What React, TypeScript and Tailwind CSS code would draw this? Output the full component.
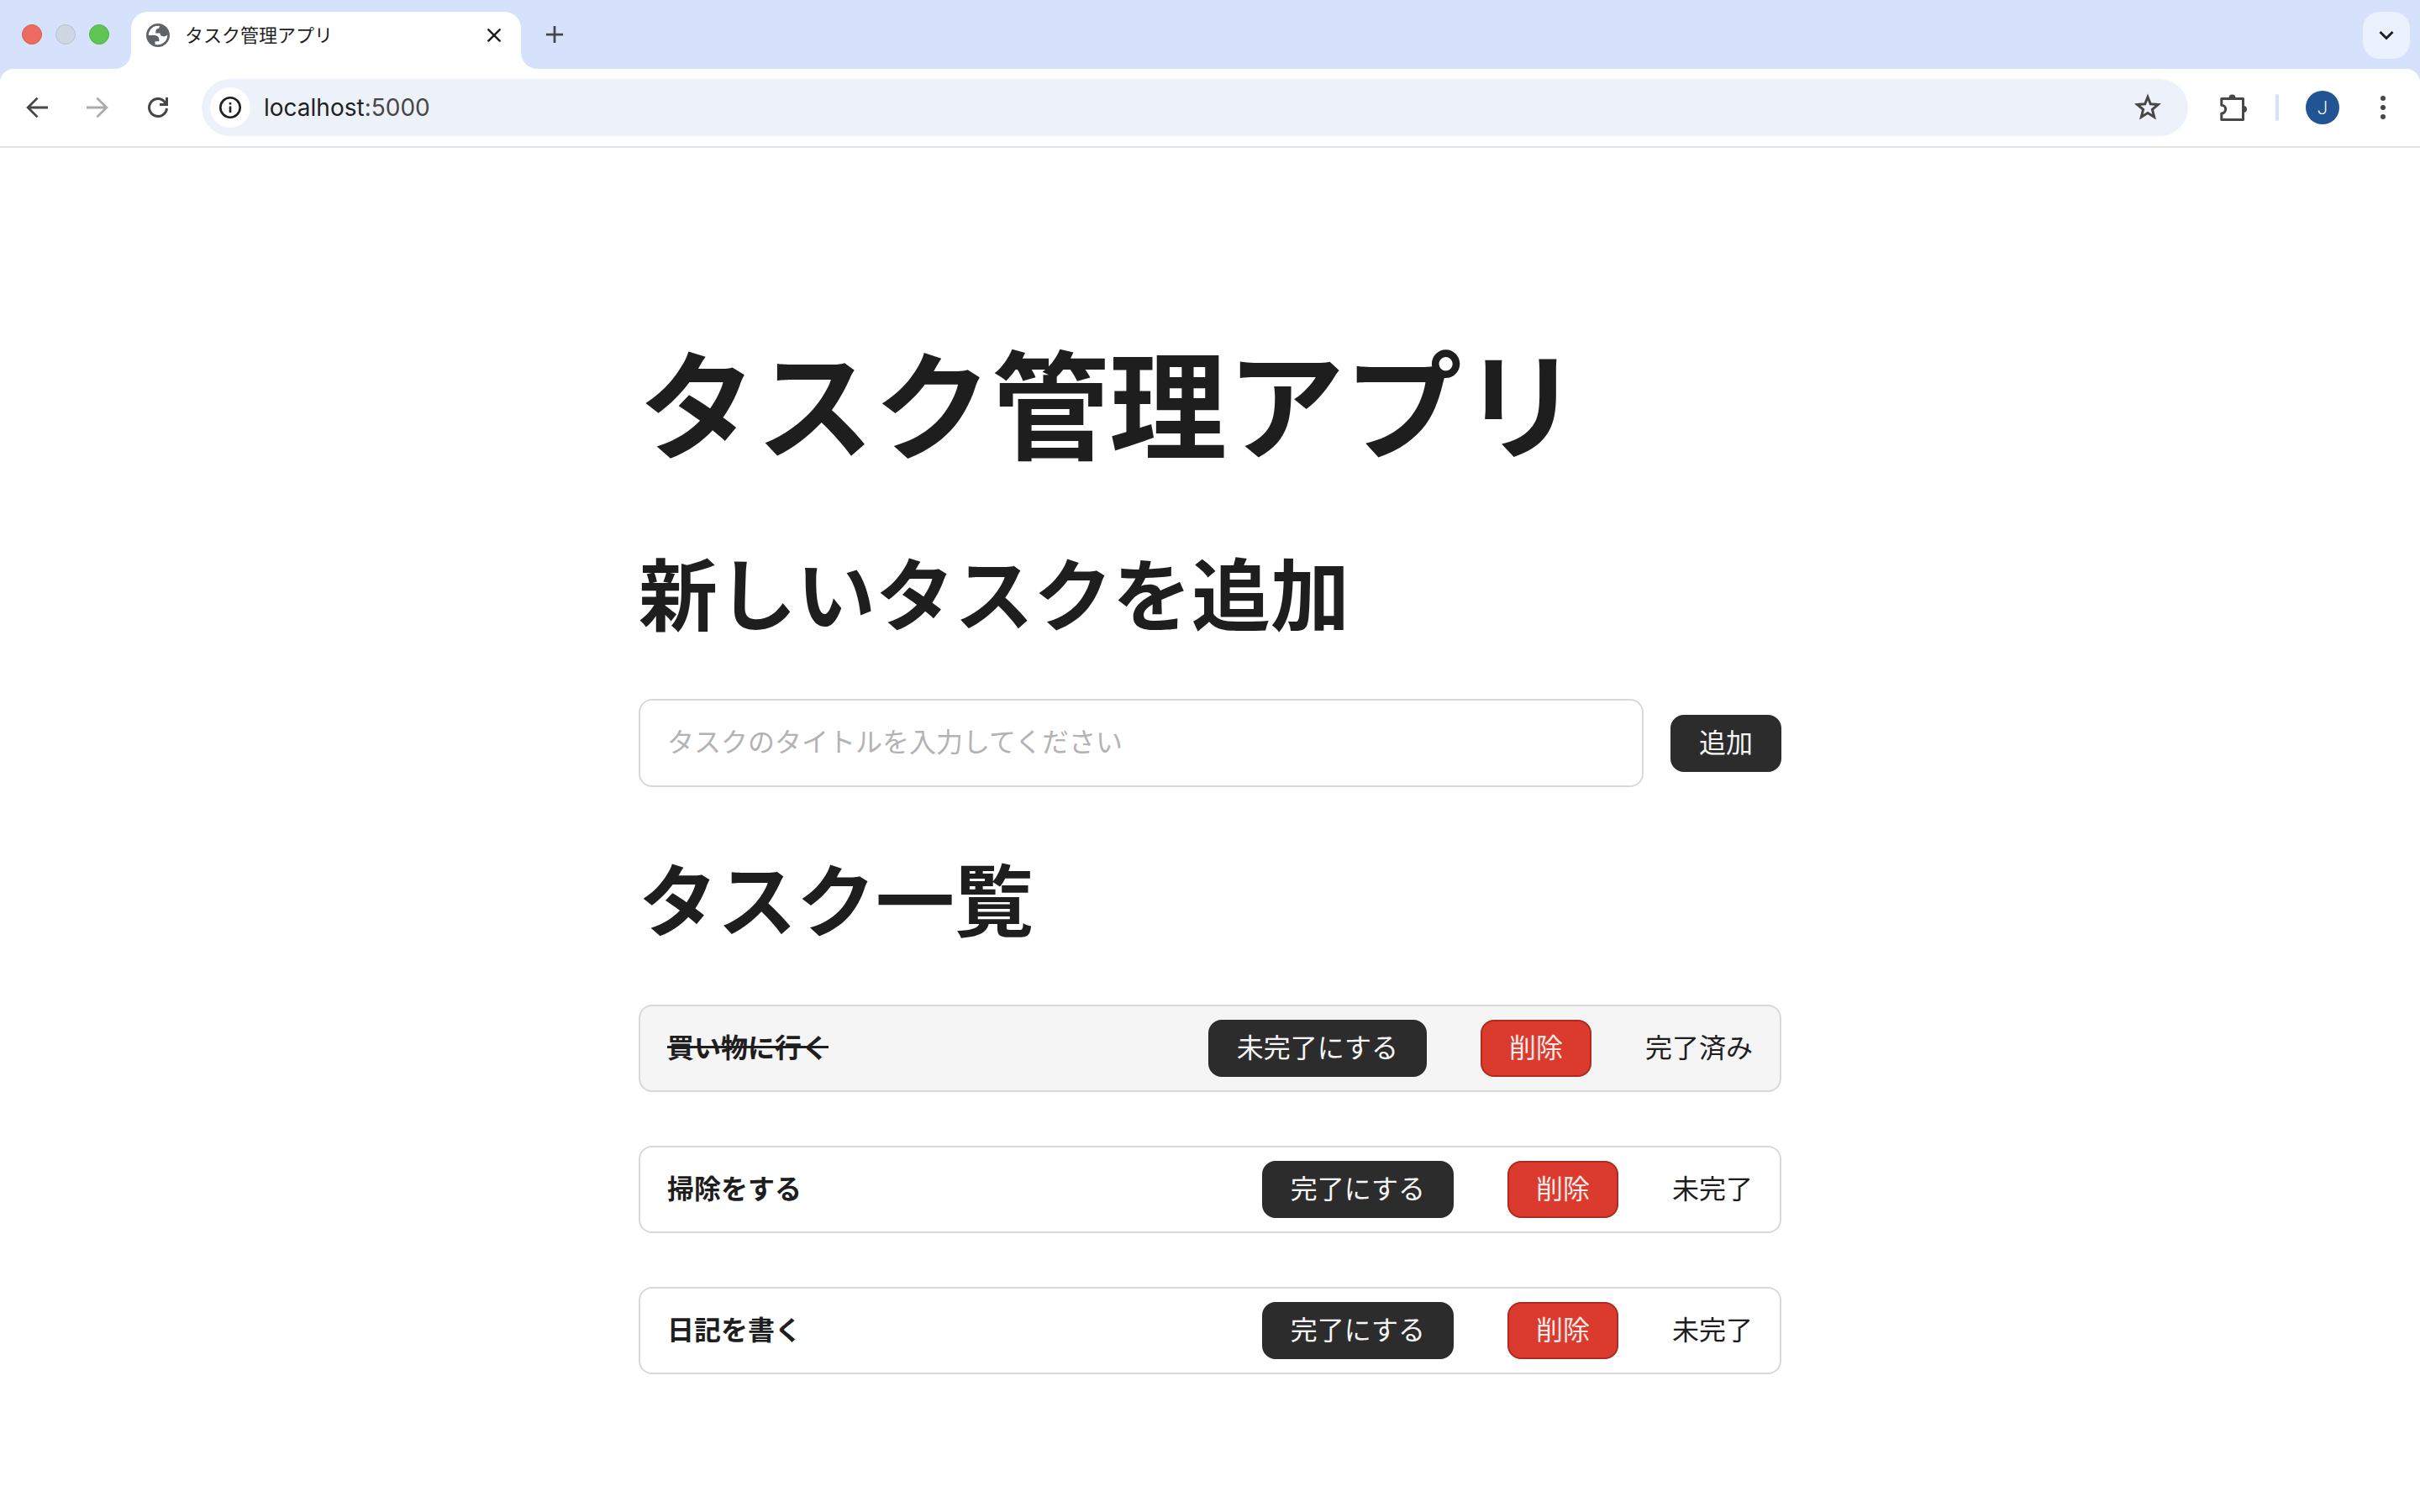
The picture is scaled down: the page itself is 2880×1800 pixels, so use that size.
import { useState } from "react";
import type { ReactNode } from "react";

interface Task {
  id: number;
  title: string;
  done: boolean;
}

const INITIAL_TASKS: Task[] = [
  { id: 1, title: "買い物に行く", done: true },
  { id: 2, title: "掃除をする", done: false },
  { id: 3, title: "日記を書く", done: false },
];

function GlobeIcon() {
  return (
    <svg viewBox="2 2 20 20" className="size-7 shrink-0 fill-[#5f6368]" aria-hidden="true">
      <path
        fillRule="evenodd"
        d="M12 2C6.48 2 2 6.48 2 12s4.48 10 10 10 10-4.48 10-10S17.52 2 12 2zM4 12h4.400c3.407.022 4.922 1.730 4.543 5.127H9.488v2.470a8.004 8.004 0 0 0 10.498-8.083C19.327 12.504 18.332 13 17 13c-2.137 0-3.206-.916-3.206-2.750h-3.748c-.274-2.728.683-4.092 2.870-4.092 0-.975.327-1.597.811-1.970A8.004 8.004 0 0 0 4 12z"
      />
    </svg>
  );
}

function StrokeIcon({ d, className }: { d: string; className: string }) {
  return (
    <svg viewBox="0 0 24 24" className={className} fill="none" stroke="currentColor" aria-hidden="true">
      <path d={d} />
    </svg>
  );
}

function ToolbarButton({ label, children }: { label: string; children: ReactNode }) {
  return (
    <button type="button" aria-label={label} className="flex size-14 shrink-0 items-center justify-center text-[#474747]">
      {children}
    </button>
  );
}

function TabStrip() {
  return (
    <div className="flex h-[82px] items-end bg-[#d6e1fc]">
      <div className="flex h-full w-[136px] shrink-0 items-center gap-4 pl-[26px]">
        <span className="size-6 rounded-full border border-[#dc5a4e] bg-[#ed6b5f]" />
        <span className="size-6 rounded-full border border-[#b9c0cf] bg-[#ced5e3]" />
        <span className="size-6 rounded-full border border-[#52b043] bg-[#61c554]" />
      </div>

      {/* 現在のタブ。両端の裾は内側に丸める */}
      <div className="size-5 shrink-0 bg-white">
        <div className="size-5 rounded-br-[20px] bg-[#d6e1fc]" />
      </div>
      <div className="flex h-[68px] w-[464px] shrink-0 items-center rounded-t-[20px] bg-white pr-4 pb-3 pl-[18px]">
        <GlobeIcon />
        <span className="ml-[18px] flex-1 pb-1 text-[22px] leading-8 text-[#1f1f1f]">タスク管理アプリ</span>
        <button type="button" aria-label="タブを閉じる" className="flex size-8 items-center justify-center text-[#1f1f1f]">
          <StrokeIcon d="M4 4l16 16M20 4L4 20" className="size-5 stroke-3 [stroke-linecap:round]" />
        </button>
      </div>
      <div className="size-5 shrink-0 bg-white">
        <div className="size-5 rounded-bl-[20px] bg-[#d6e1fc]" />
      </div>

      <button type="button" aria-label="新しいタブ" className="flex h-full w-10 items-center justify-center text-[#474747]">
        <StrokeIcon d="M12 1v22M1 12h22" className="size-[22px] stroke-3" />
      </button>
      <button
        type="button"
        aria-label="タブを検索"
        className="mr-3 mb-3 ml-auto flex size-14 items-center justify-center rounded-[20px] bg-[#ebf2fd] text-[#1f1f1f]"
      >
        <StrokeIcon d="M4.500 8l7.500 7.500L19.500 8" className="size-6 stroke-3" />
      </button>
    </div>
  );
}

function Toolbar() {
  return (
    <div className="bg-[#d6e1fc]">
      <div className="flex h-[94px] items-center rounded-t-[16px] border-b-2 border-[#e1e3e1] bg-white px-4">
        <ToolbarButton label="戻る">
          <StrokeIcon d="M24 12H2.500M12.500 1.500L2 12 12.500 22.500" className="size-[26px] stroke-[2.6]" />
        </ToolbarButton>
        <div className="ml-4 opacity-45">
          <ToolbarButton label="進む">
            <StrokeIcon d="M0 12h21.500M11.500 1.500L22 12 11.500 22.500" className="size-[26px] stroke-[2.6]" />
          </ToolbarButton>
        </div>
        <div className="ml-4">
          <ToolbarButton label="再読み込み">
            <svg viewBox="0 0 24 24" className="size-6" aria-hidden="true">
              <path
                d="M22.500 13A10.500 10.500 0 1 1 18.500 3.700L21 7"
                fill="none"
                stroke="currentColor"
                strokeWidth="3"
              />
              <path d="M14 7h7V0h3v10H14z" fill="currentColor" />
            </svg>
          </ToolbarButton>
        </div>

        <div className="ml-6 flex h-[68px] flex-1 items-center rounded-full bg-[#edf2fa] pr-5 pl-[10px]">
          <button
            type="button"
            aria-label="サイト情報を表示"
            className="flex size-12 items-center justify-center rounded-full bg-white text-[#1f1f1f]"
          >
            <svg viewBox="0 0 26 26" className="size-[26px]" aria-hidden="true">
              <circle cx="13" cy="13" r="11.700" fill="none" stroke="currentColor" strokeWidth="2.600" />
              <path d="M11.700 11.500h2.600v7.500h-2.600zM11.700 7h2.600v2.600h-2.600z" fill="currentColor" />
            </svg>
          </button>
          <a
            href="http://localhost:5000"
            className="ml-4 flex-1 font-['Inter','Noto_Sans_CJK_JP',sans-serif] text-[28px] leading-10 text-[#1f1f1f]"
          >
            localhost<span className="text-[#474747]">:5000</span>
          </a>
          <ToolbarButton label="ブックマークに追加">
            <StrokeIcon
              d="M12 3.700l2.200 5.500 6 .500-4.600 3.900 1.500 5.900L12 16.300 6.900 19.500l1.500-5.900-4.600-3.900 6-.500z"
              className="size-9 stroke-2"
            />
          </ToolbarButton>
        </div>

        <div className="ml-[26px] flex items-center">
          <ToolbarButton label="拡張機能">
            <svg viewBox="0 0 32 32" className="size-8" aria-hidden="true">
              <path
                d="M3 5.500h24.500v25H1.800v-7.500a4.800 4.800 0 0 0 0-9.800V5.500z"
                fill="none"
                stroke="currentColor"
                strokeWidth="3"
                strokeLinejoin="round"
              />
              <path d="M10.500 4.500a4 4 0 0 1 8 0zM28 14a4 4 0 0 1 0 8z" fill="currentColor" />
            </svg>
          </ToolbarButton>
          <span className="ml-[22px] h-8 w-1 rounded-full bg-[#d6e1fc]" />
          <button
            type="button"
            aria-label="プロフィール"
            className="ml-8 flex size-10 items-center justify-center rounded-full bg-[#205493] font-['Roboto',sans-serif] text-[22px] font-light text-white"
          >
            J
          </button>
          <div className="ml-6">
            <ToolbarButton label="メニュー">
              <svg viewBox="0 0 28 28" className="size-7 fill-current" aria-hidden="true">
                <circle cx="14" cy="3" r="3" />
                <circle cx="14" cy="14" r="3" />
                <circle cx="14" cy="25" r="3" />
              </svg>
            </ToolbarButton>
          </div>
        </div>
      </div>
    </div>
  );
}

interface PrimaryButtonProps {
  type?: "button" | "submit";
  onClick?: () => void;
  children: ReactNode;
}

function PrimaryButton({ type = "button", onClick, children }: PrimaryButtonProps) {
  return (
    <button
      type={type}
      onClick={onClick}
      className="shrink-0 rounded-2xl border-2 border-[#2c2c2c] bg-[#2c2c2c] px-8 pt-[13px] pb-[19px] text-[32px] leading-8 text-[#f5f5f5]"
    >
      {children}
    </button>
  );
}

function TaskRow({ task, onToggle, onDelete }: { task: Task; onToggle: () => void; onDelete: () => void }) {
  return (
    <li
      className={`flex items-center gap-16 rounded-2xl border-2 border-[#d9d9d9] px-8 py-4 ${
        task.done ? "bg-[#f5f5f5]" : "bg-white"
      }`}
    >
      <span className={`flex-1 pb-[6px] font-bold ${task.done ? "line-through" : ""}`}>{task.title}</span>
      <PrimaryButton onClick={onToggle}>{task.done ? "未完了にする" : "完了にする"}</PrimaryButton>
      <button
        type="button"
        onClick={onDelete}
        className="shrink-0 rounded-2xl border-2 border-[#af2a1f] bg-[#db3a2e] px-8 pt-[13px] pb-[19px] text-[32px] leading-8 text-[#fee9e7]"
      >
        削除
      </button>
      <span className="pb-[6px]">{task.done ? "完了済み" : "未完了"}</span>
    </li>
  );
}

export default function App() {
  const [tasks, setTasks] = useState<Task[]>(INITIAL_TASKS);
  const [title, setTitle] = useState("");

  function addTask() {
    if (!title.trim()) return;
    setTasks([...tasks, { id: Date.now(), title, done: false }]);
    setTitle("");
  }

  function toggleTask(id: number) {
    setTasks(tasks.map((t) => (t.id === id ? { ...t, done: !t.done } : t)));
  }

  return (
    <div lang="ja" className="min-h-screen bg-white font-['Noto_Sans_CJK_JP',sans-serif] text-[#1e1e1e]">
      <header>
        <TabStrip />
        <Toolbar />
      </header>

      <main className="mx-auto max-w-[1360px] pt-[219px] pb-16 text-[32px] leading-8">
        <h1 className="text-[140px] leading-[160px] font-bold">タスク管理アプリ</h1>

        <h2 className="mt-[92px] text-[94px] leading-[112px] font-bold">新しいタスクを追加</h2>
        <form
          className="mt-[73px] flex items-center gap-8"
          onSubmit={(e) => {
            e.preventDefault();
            addTask();
          }}
        >
          <input
            type="text"
            aria-label="タスクのタイトル"
            placeholder="タスクのタイトルを入力してください"
            value={title}
            onChange={(e) => setTitle(e.target.value)}
            className="h-[105px] min-w-0 flex-1 rounded-2xl border-2 border-[#d9d9d9] bg-white px-8 pb-2 text-[32px] leading-10 placeholder:text-[#b3b3b3]"
          />
          <PrimaryButton type="submit">追加</PrimaryButton>
        </form>

        <h2 className="mt-[74px] text-[94px] leading-[112px] font-bold">タスク一覧</h2>
        <ul className="mt-[73px] flex flex-col gap-16">
          {tasks.map((task) => (
            <TaskRow
              key={task.id}
              task={task}
              onToggle={() => toggleTask(task.id)}
              onDelete={() => setTasks(tasks.filter((t) => t.id !== task.id))}
            />
          ))}
        </ul>
      </main>
    </div>
  );
}
